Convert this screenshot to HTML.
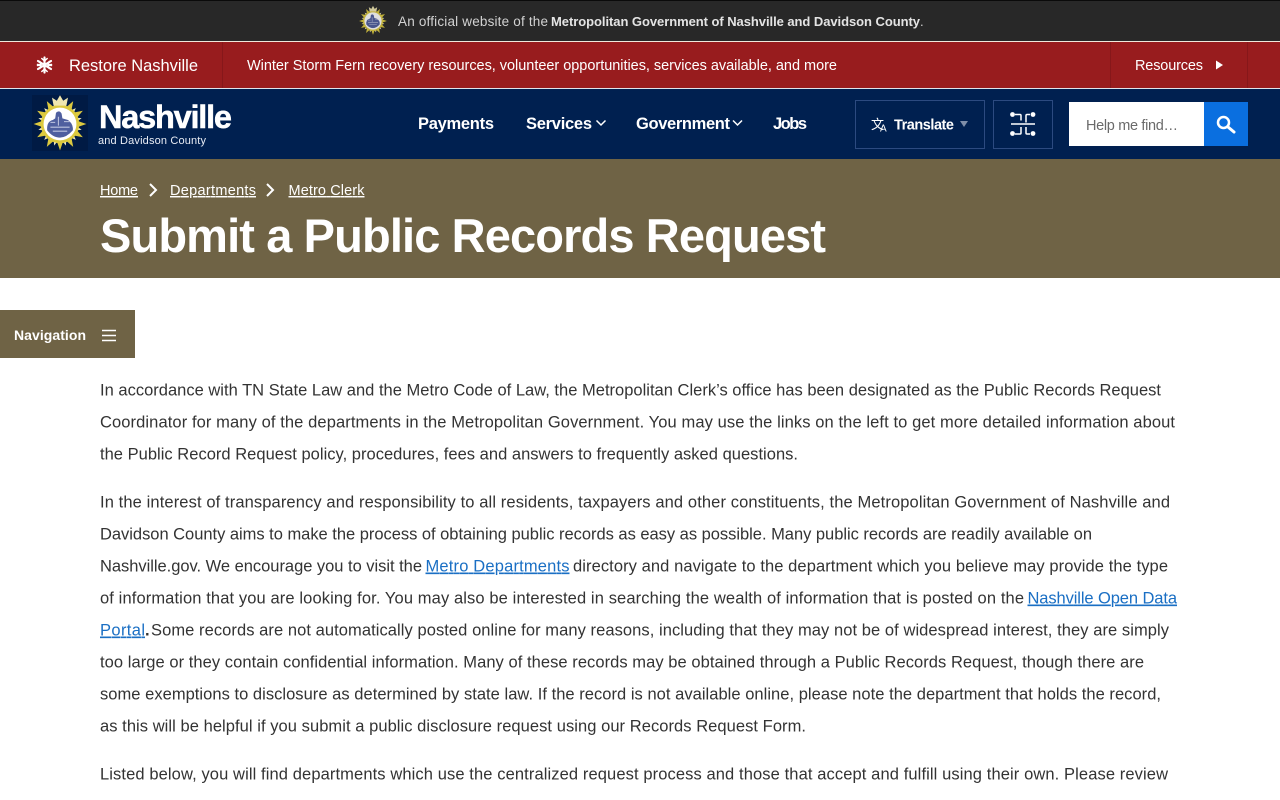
<!DOCTYPE html>
<html lang="en">
<head>
<meta charset="utf-8">
<title>Submit a Public Records Request</title>
<style>
html,body{margin:0;padding:0;width:1280px;height:800px;overflow:hidden;background:#fff}
svg{display:block}
text{font-family:"Liberation Sans",sans-serif}
.b{font-size:16.5px;fill:#333}
.l{font-size:16.5px;fill:#1a6fc4;text-decoration:underline}
.n{font-size:16.5px;font-weight:700;fill:#fff}
.c{font-size:14.5px;fill:#fff;text-decoration:underline}
</style>
</head>
<body>
<svg width="1280" height="800" viewBox="0 0 1280 800" xmlns="http://www.w3.org/2000/svg">
<defs>
<polygon id="r" points="-4.500,-20 0,-33 4.500,-20"/>
<polygon id="s" points="-3,-20 0,-28 3,-20"/>
<g id="seal">
<g fill="#f2ecc4">
<use href="#s" transform="rotate(15)"/><use href="#s" transform="rotate(45)"/><use href="#s" transform="rotate(75)"/>
<use href="#s" transform="rotate(105)"/><use href="#s" transform="rotate(135)"/><use href="#s" transform="rotate(165)"/>
<use href="#s" transform="rotate(195)"/><use href="#s" transform="rotate(225)"/><use href="#s" transform="rotate(255)"/>
<use href="#s" transform="rotate(285)"/><use href="#s" transform="rotate(315)"/><use href="#s" transform="rotate(345)"/>
</g>
<g fill="#dcc93f">
<use href="#r" transform="rotate(30)"/><use href="#r" transform="rotate(60)"/><use href="#r" transform="rotate(90)"/>
<use href="#r" transform="rotate(120)"/><use href="#r" transform="rotate(150)"/><use href="#r" transform="rotate(180)"/>
<use href="#r" transform="rotate(210)"/><use href="#r" transform="rotate(240)"/><use href="#r" transform="rotate(270)"/>
<use href="#r" transform="rotate(300)"/><use href="#r" transform="rotate(330)"/>
</g>
<circle r="24" fill="#dcc93f"/>
<circle r="20.500" fill="#fff"/>
<path d="M-16 8 Q-17 -3 -9 -5 L-6 -7 L-5 -14 Q-1 -18 2 -13 L3 -7 L10 -5 Q17 0 16 8 Q8 17 0 17 Q-9 17 -16 8Z" fill="#4f5f9f"/>
<path d="M-12 4h24M-9 9h18M-2 -9v11M5 -3h7M-12 -2h6" stroke="#bfc5e0" stroke-width="1.300" fill="none"/>
<path d="M-8 -23 L-10 -33 L-4 -29 L0 -36 L4 -29 L10 -33 L8 -23Z" fill="#efe6b0"/>
</g>
</defs>

<!-- top bar -->
<rect width="1280" height="41" fill="#282828"/>
<rect width="1280" height="1" fill="#0a0a0a"/>
<rect y="41" width="1280" height="1" fill="#f1e9dc"/>
<use href="#seal" transform="translate(373 21) scale(.42)" opacity=".85"/>
<text x="398" y="26" font-size="13.500" fill="#d2d2d2" textLength="150">An official website of the</text>
<text x="551" y="26" font-size="13" font-weight="700" fill="#e4e4e4" textLength="369">Metropolitan Government of Nashville and Davidson County</text>
<text x="920" y="26" font-size="13" fill="#d2d2d2">.</text>

<!-- alert bar -->
<rect y="42" width="1280" height="46" fill="#981c1e"/>
<rect y="88" width="1280" height="1" fill="#dfe3ec"/>
<rect x="222" y="42" width="1" height="46" fill="#86171a"/>
<rect x="1110" y="42" width="1" height="46" fill="#86171a"/>
<rect x="1247" y="42" width="1" height="46" fill="#86171a"/>
<g stroke="#fff" stroke-width="2.200" stroke-linecap="round" fill="none">
<path d="M44.500 57.500v15M38 61l13 8M51 61l-13 8"/>
<path d="M41.800 58.500l2.700 2.500 2.700-2.500M41.800 71.500l2.700-2.500 2.700 2.500M37.500 64.500l3.500.5-1.200 3.500M51.500 64.500l-3.500.5 1.200 3.500M37.500 65.500l3.500-.5-1.200-3.500M51.500 65.500l-3.500-.5 1.200-3.500" stroke-width="1.500"/>
</g>
<text x="69" y="71" font-size="16.500" fill="#fff" textLength="129">Restore Nashville</text>
<text x="247" y="70" font-size="14.500" fill="#fff" textLength="590">Winter Storm Fern recovery resources, volunteer opportunities, services available, and more</text>
<text x="1135" y="70" font-size="14.500" fill="#fff" textLength="68">Resources</text>
<polygon points="1216,60.500 1223,65 1216,69.500" fill="#fff"/>

<!-- main nav -->
<rect y="89" width="1280" height="70" fill="#002050"/>
<rect x="32" y="95" width="56" height="56" fill="#001a44"/>
<use href="#seal" transform="translate(60 124) scale(.8)"/>
<text x="99" y="128" font-size="32.500" font-weight="700" fill="#fff" stroke="#fff" stroke-width=".5" textLength="133">Nashville</text>
<text x="98" y="144" font-size="11" fill="#e8ecf4" textLength="108">and Davidson County</text>

<text class="n" x="418" y="129" textLength="76">Payments</text>
<text class="n" x="526" y="129" textLength="66">Services</text>
<path d="M596.500 120.500l4.500 4.500 4.500-4.500" fill="none" stroke="#fff" stroke-width="1.500"/>
<text class="n" x="636" y="129" textLength="94">Government</text>
<path d="M733 120.500l4.500 4.500 4.500-4.500" fill="none" stroke="#fff" stroke-width="1.500"/>
<text class="n" x="773" y="129" textLength="34">Jobs</text>

<rect x="855.500" y="100.500" width="129" height="48" fill="none" stroke="#2c4a80"/>
<text x="871" y="129" font-size="13" font-family="'Noto Sans CJK SC'" fill="#fff" style="font-family:'Liberation Sans','Noto Sans CJK SC',sans-serif">文</text>
<text x="880" y="131.500" font-size="10" fill="#fff">A</text>
<text x="894" y="129.500" font-size="14.500" font-weight="700" fill="#fff" textLength="60">Translate</text>
<polygon points="960,121 968,121 964,127" fill="#7f8ea8"/>

<rect x="993.500" y="100.500" width="59" height="48" fill="none" stroke="#2c4a80"/>
<g fill="none" stroke="#fff" stroke-width="1.500">
<path d="M1015 114.500h5q1 0 1 1v5M1030 114.500h-3q-1 0-1 1v7M1011 124h24M1015 134h5q1 0 1-1v-6M1030 134h-3q-1 0-1-1v-6"/>
</g>
<g fill="#fff"><circle cx="1012.500" cy="114.500" r="2.400"/><circle cx="1033" cy="114.500" r="2.400"/><circle cx="1012.500" cy="133.500" r="2.400"/><circle cx="1033" cy="133.500" r="2.400"/></g>

<rect x="1069" y="102" width="135" height="44" fill="#fff"/>
<text x="1086" y="130" font-size="14.500" fill="#6a6a6a" textLength="92">Help me find…</text>
<rect x="1204" y="102" width="44" height="44" fill="#0a6fe0"/>
<circle cx="1223.500" cy="122.500" r="5.500" fill="none" stroke="#fff" stroke-width="2.500"/>
<path d="M1228 127l6 5" stroke="#fff" stroke-width="3" stroke-linecap="round"/>

<!-- page header -->
<rect y="159" width="1280" height="119" fill="#6f6345"/>
<text class="c" x="100" y="195" textLength="38">Home</text>
<path d="M150 184l6 6-6 6" fill="none" stroke="#fff" stroke-width="2"/>
<text class="c" x="170" y="195" textLength="86">Departments</text>
<path d="M267 184l6 6-6 6" fill="none" stroke="#fff" stroke-width="2"/>
<text class="c" x="288.500" y="195" textLength="76">Metro Clerk</text>
<text x="100" y="252" font-size="47" font-weight="700" fill="#fff" textLength="726">Submit a Public Records Request</text>

<!-- side nav button -->
<rect y="310" width="135" height="48" fill="#6f6345"/>
<text x="14" y="340" font-size="14" font-weight="700" fill="#fff" textLength="72">Navigation</text>
<path d="M102 330.500h14M102 335.500h14M102 340.500h14" stroke="#fff" stroke-width="1.500"/>

<!-- body -->
<text class="b" x="100" y="395.500" textLength="1061">In accordance with TN State Law and the Metro Code of Law, the Metropolitan Clerk’s office has been designated as the Public Records Request</text>
<text class="b" x="100" y="427.500" textLength="1075">Coordinator for many of the departments in the Metropolitan Government. You may use the links on the left to get more detailed information about</text>
<text class="b" x="100" y="459.500" textLength="698">the Public Record Request policy, procedures, fees and answers to frequently asked questions.</text>

<text class="b" x="100" y="507.500" textLength="1070">In the interest of transparency and responsibility to all residents, taxpayers and other constituents, the Metropolitan Government of Nashville and</text>
<text class="b" x="100" y="539.500" textLength="992">Davidson County aims to make the process of obtaining public records as easy as possible. Many public records are readily available on</text>
<text class="b" x="100" y="571.500" textLength="322">Nashville.gov. We encourage you to visit the</text>
<text class="l" x="425.500" y="571.500" textLength="144">Metro Departments</text>
<text class="b" x="573" y="571.500" textLength="595">directory and navigate to the department which you believe may provide the type</text>
<text class="b" x="100" y="603.500" textLength="924">of information that you are looking for. You may also be interested in searching the wealth of information that is posted on the</text>
<text class="l" x="1027.500" y="603.500" textLength="149.500">Nashville Open Data</text>
<text class="l" x="100" y="635.500" textLength="45">Portal</text>
<text class="b" x="145" y="635.500" font-weight="700">.</text>
<text class="b" x="151" y="635.500" textLength="1018">Some records are not automatically posted online for many reasons, including that they may not be of widespread interest, they are simply</text>
<text class="b" x="100" y="667.500" textLength="1044">too large or they contain confidential information. Many of these records may be obtained through a Public Records Request, though there are</text>
<text class="b" x="100" y="699.500" textLength="1061">some exemptions to disclosure as determined by state law. If the record is not available online, please note the department that holds the record,</text>
<text class="b" x="100" y="731.500" textLength="706">as this will be helpful if you submit a public disclosure request using our Records Request Form.</text>

<text class="b" x="100" y="779.500" textLength="1068">Listed below, you will find departments which use the centralized request process and those that accept and fulfill using their own. Please review</text>
</svg>
</body>
</html>
